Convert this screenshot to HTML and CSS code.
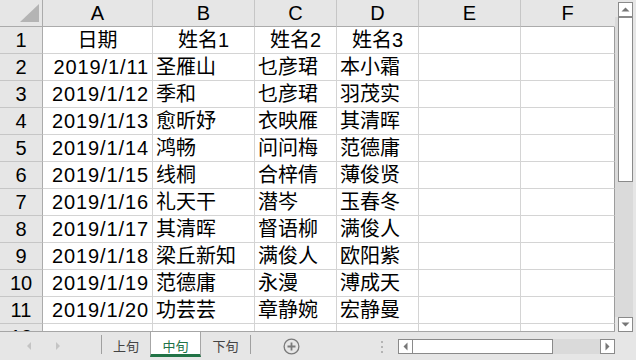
FILE: index.html
```html
<!DOCTYPE html>
<html lang="zh-CN">
<head>
<meta charset="utf-8">
<title>Sheet</title>
<link rel="stylesheet" href="styles.css">
</head>
<body>
<div class="app">
  <div class="main">
    <div class="sheet">
      <div class="corner"><svg width="42" height="26" viewBox="0 0 42 26"><polygon points="39,4 39,22 20,22" fill="#b4b4b4"/></svg></div>
      <div class="ch">A</div><div class="ch">B</div><div class="ch">C</div><div class="ch">D</div><div class="ch">E</div><div class="ch chf">F</div>

      <div class="rh">1</div><div class="hd">日期</div><div class="hd">姓名1</div><div class="hd">姓名2</div><div class="hd">姓名3</div><div></div><div class="cf"></div>
      <div class="rh">2</div><div class="num">2019/1/11</div><div>圣雁山</div><div>乜彦珺</div><div>本小霜</div><div></div><div class="cf"></div>
      <div class="rh">3</div><div class="num">2019/1/12</div><div>季和</div><div>乜彦珺</div><div>羽茂实</div><div></div><div class="cf"></div>
      <div class="rh">4</div><div class="num">2019/1/13</div><div>愈昕妤</div><div>衣映雁</div><div>其清晖</div><div></div><div class="cf"></div>
      <div class="rh">5</div><div class="num">2019/1/14</div><div>鸿畅</div><div>问问梅</div><div>范德庸</div><div></div><div class="cf"></div>
      <div class="rh">6</div><div class="num">2019/1/15</div><div>线桐</div><div>合梓倩</div><div>薄俊贤</div><div></div><div class="cf"></div>
      <div class="rh">7</div><div class="num">2019/1/16</div><div>礼天干</div><div>潜岑</div><div>玉春冬</div><div></div><div class="cf"></div>
      <div class="rh">8</div><div class="num">2019/1/17</div><div>其清晖</div><div>督语柳</div><div>满俊人</div><div></div><div class="cf"></div>
      <div class="rh">9</div><div class="num">2019/1/18</div><div>梁丘新知</div><div>满俊人</div><div>欧阳紫</div><div></div><div class="cf"></div>
      <div class="rh">10</div><div class="num">2019/1/19</div><div>范德庸</div><div>永漫</div><div>溥成天</div><div></div><div class="cf"></div>
      <div class="rh">11</div><div class="num">2019/1/20</div><div>功芸芸</div><div>章静婉</div><div>宏静曼</div><div></div><div class="cf"></div>
      <div class="rh">12</div><div></div><div></div><div></div><div></div><div></div><div class="cf"></div>
    </div>
    <div class="vscroll">
      <div class="sbtn vbtn"><svg width="13" height="13" viewBox="0 0 13 13"><polygon points="2.5,8.5 10.5,8.5 6.5,4.5" fill="#777"/></svg></div>
      <div class="trough">
        <div class="vthumb"></div>
      </div>
      <div class="sbtn vbtn vdown"><svg width="13" height="13" viewBox="0 0 13 13"><polygon points="2.5,4.5 10.5,4.5 6.5,8.5" fill="#777"/></svg></div>
    </div>
  </div>
  <div class="tabbar">
    <div class="nav"><svg width="101" height="28" viewBox="0 0 101 28"><polygon points="31,10 31,18 27,14" fill="#c4c4c4"/><polygon points="56,10 56,18 60,14" fill="#c4c4c4"/></svg></div>
    <div class="tsep"></div>
    <div class="tab t1">上旬</div>
    <div class="tab active">中旬</div>
    <div class="tab t3">下旬</div>
    <div class="tsep"></div>
    <div class="addsheet"><svg width="17" height="17" viewBox="0 0 17 17"><circle cx="8.5" cy="8.5" r="7.4" fill="none" stroke="#7a7a7a" stroke-width="1.3"/><path d="M4.5 8.5H12.5M8.5 4.5V12.5" stroke="#7a7a7a" stroke-width="1.8"/></svg></div>
    <div class="dots"><svg width="2" height="12" viewBox="0 0 2 12"><rect x="0" y="0" width="2" height="2" fill="#b4b4b4"/><rect x="0" y="5" width="2" height="2" fill="#b4b4b4"/><rect x="0" y="10" width="2" height="2" fill="#b4b4b4"/></svg></div>
    <div class="hscroll">
      <div class="sbtn"><svg width="13" height="13" viewBox="0 0 13 13"><polygon points="8.5,2.5 8.5,10.5 4.5,6.5" fill="#777"/></svg></div>
      <div class="hthumb"></div>
      <div class="htrack"></div>
      <div class="sbtn"><svg width="13" height="13" viewBox="0 0 13 13"><polygon points="4.5,2.5 4.5,10.5 8.5,6.5" fill="#777"/></svg></div>
    </div>
  </div>
</div>
</body>
</html>
```

FILE: styles.css
```css
html, body {
  margin: 0;
  padding: 0;
}
body {
  background: #e6e6e6;
  font-family: "Liberation Sans", Arial, "Noto Sans CJK SC", sans-serif;
  color: #000;
}
.app {
  width: 636px;
  height: 360px;
  overflow: hidden;
}
.main {
  display: flex;
  height: 332px;
}
.sheet {
  width: 615px;
  height: 332px;
  box-sizing: border-box;
  border-bottom: 1px solid #a6a6a6;
  display: grid;
  grid-template-columns: 43px 110px 102px 82px 82px 102px 94px;
  grid-auto-rows: 27px;
  overflow: hidden;
  background: #fff;
}
.sheet > div {
  box-sizing: border-box;
  border-right: 1px solid #d4d4d4;
  border-bottom: 1px solid #d4d4d4;
  font-size: 20px;
  line-height: 26px;
  white-space: nowrap;
  overflow: hidden;
  padding: 0 3px;
}
.sheet > .corner {
  padding: 0;
  background: #e6e6e6;
  border-right-color: #ababab;
  border-bottom-color: #ababab;
}
.corner svg {
  display: block;
}
.sheet > .ch {
  background: #e6e6e6;
  border-right-color: #c6c6c6;
  border-bottom-color: #ababab;
  text-align: center;
}
.sheet > .chf {
  border-right-color: #e6e6e6;
}
.sheet > .rh {
  background: #e6e6e6;
  border-right-color: #ababab;
  border-bottom-color: #c6c6c6;
  text-align: center;
  padding: 0;
}
.sheet > .hd {
  text-align: center;
}
.sheet > .num {
  text-align: right;
  padding-right: 3px;
  letter-spacing: 0.9px;
}
.sheet > .cf {
  border-right-color: #9c9c9c;
}

/* vertical scrollbar */
.vscroll {
  width: 21px;
  height: 332px;
  box-sizing: border-box;
  padding-top: 2px;
  display: flex;
  flex-direction: column;
}
.sbtn {
  width: 15px;
  height: 15px;
  box-sizing: border-box;
  border: 1px solid #8a8a8a;
  background: #fff;
  display: flex;
  align-items: center;
  justify-content: center;
  flex: none;
}
.sbtn svg {
  display: block;
}
.vbtn {
  margin-left: 3px;
}
.trough {
  flex: 1;
  width: 18px;
  background: #dadada;
  display: flex;
  flex-direction: column;
  align-items: flex-end;
}
.vthumb {
  width: 15px;
  height: 165px;
  box-sizing: border-box;
  border: 1px solid #8a8a8a;
  background: #fff;
}
.vdown {
  background: #fff;
}

/* sheet tabs */
.tabbar {
  height: 28px;
  display: flex;
  align-items: flex-start;
}
.nav {
  width: 101px;
  height: 28px;
  flex: none;
}
.nav svg {
  display: block;
}
.tsep {
  width: 1px;
  height: 19px;
  margin-top: 3px;
  background: #a0a0a0;
  flex: none;
}
.tab {
  height: 24px;
  display: flex;
  align-items: center;
  justify-content: center;
  font-size: 13px;
  color: #444;
  flex: none;
  box-sizing: border-box;
  padding-top: 2px;
}
.t1 {
  width: 48px;
}
.t3 {
  width: 49px;
}
.tab.active {
  width: 51px;
  height: 25px;
  background: #fff;
  color: #217346;
  border-left: 1px solid #a6a6a6;
  border-right: 1px solid #a6a6a6;
  border-bottom: 3px solid #217346;
  padding-top: 4px;
}
.addsheet {
  margin-left: 32px;
  margin-top: 6px;
  width: 17px;
  height: 17px;
  flex: none;
}
.addsheet svg, .dots svg {
  display: block;
}
.dots {
  margin-left: 81px;
  margin-top: 9px;
  width: 2px;
  flex: none;
}
.hscroll {
  margin-left: 15px;
  margin-top: 7px;
  display: flex;
  height: 15px;
  width: 217px;
  flex: none;
}
.hthumb {
  width: 140px;
  height: 15px;
  box-sizing: border-box;
  border: 1px solid #8a8a8a;
  border-left: none;
  background: #fff;
}
.htrack {
  width: 47px;
  height: 15px;
  background: #dadada;
}
```
